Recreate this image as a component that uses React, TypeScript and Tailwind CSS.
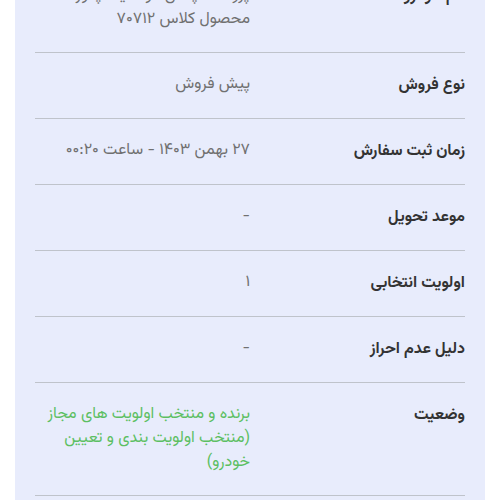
import React from "react";

const rows: { label: string; value: string; green?: boolean }[] = [
  { label: "نام خودرو", value: "پژو ۲۰۷ پلاس اتوماتیک پانوراما -\nمحصول کلاس ۷۰۷۱۲" },
  { label: "نوع فروش", value: "پیش فروش" },
  { label: "زمان ثبت سفارش", value: "۲۷ بهمن ۱۴۰۳ - ساعت ۰۰:۲۰" },
  { label: "موعد تحویل", value: "-" },
  { label: "اولویت انتخابی", value: "۱" },
  { label: "دلیل عدم احراز", value: "-" },
  {
    label: "وضعیت",
    value: "برنده و منتخب اولویت های مجاز (منتخب اولویت بندی و تعیین خودرو)",
    green: true,
  },
];

export default function App() {
  return (
    <div
      dir="rtl"
      className="w-[500px] h-[500px] overflow-hidden bg-white"
      style={{ fontFamily: '"Vazirmatn", "Noto Sans Arabic", "DejaVu Sans", sans-serif' }}
    >
      <div className="mx-[15px] -mt-[36px] bg-[#e8ecfc] px-5 pb-10">
        {rows.map((r, i) => (
          <div
            key={i}
            className="grid grid-cols-2 items-start py-5 border-b border-[#bfc3cb]"
          >
            <div className="text-[16px] leading-[25px] font-bold text-[#333333]">{r.label}</div>
            <div
              className={
                r.green
                  ? "text-[16px] leading-[24px] text-[#5cbf62] whitespace-pre-line"
                  : "text-[16px] leading-[24px] text-[#707070] whitespace-pre-line"
              }
            >
              {r.value}
            </div>
          </div>
        ))}
      </div>
    </div>
  );
}
